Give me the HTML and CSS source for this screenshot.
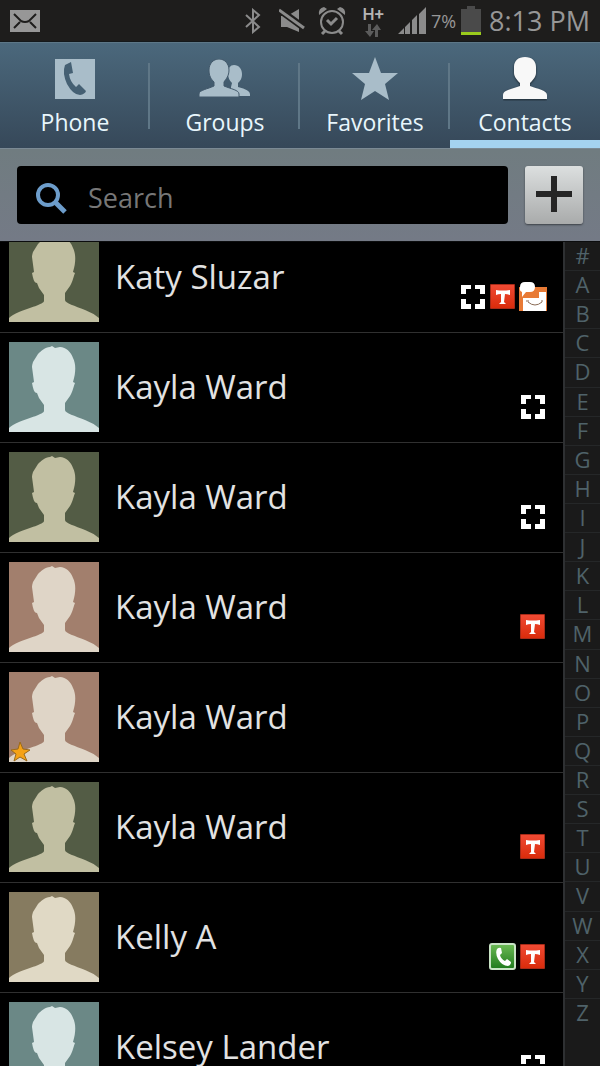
FILE: index.html
```html
<!DOCTYPE html>
<html lang="en">
<head>
    <meta charset="UTF-8">
    <meta name="viewport" content="width=device-width, initial-scale=1.0">
    <title>Contacts</title>
    <link rel="stylesheet" href="styles.css">
</head>
<body>
    <!-- shared shapes -->
    <svg class="defs" aria-hidden="true">
        <symbol id="person" viewBox="0 0 90 90">
            <path d="M43 4L41 5C36 5 32 9 29 12L24 20Q23 23 23 25L25 40L23 41C24 46 25 51 28 51L30 56L35 63V69C35 72 20 76 10 80Q3 83 0 86V90H90V86Q84 81 76 78C66 74 56 71 56 68V61L61 54C64 49 64 46 66 41L64 40C67 30 67 22 64 16C62 10 57 5 51 5L46 6Z"/>
        </symbol>
        <symbol id="focus" viewBox="0 0 30 30">
            <path fill="#fff" d="M3 3H13V7H8V12H3ZM17 3H27V12H22V7H17ZM3 17H8V22H13V27H3ZM22 17H27V27H17V22H22Z"/>
        </symbol>
        <symbol id="tango" viewBox="0 0 30 30">
            <rect x="2" y="2" width="25" height="25" rx="1" fill="#a82a17"/>
            <rect x="3" y="3" width="23" height="23" fill="url(#red)"/>
            <path fill="#fff" d="M8 8Q14 9 22 8V13Q19 12 17 12L16 20L18 22H11L13 20V12Q10 12 8 13Z"/>
        </symbol>
        <symbol id="call" viewBox="0 0 30 30">
            <rect x="2" y="2" width="25" height="25" rx="2" fill="url(#green)" stroke="#c9e3c5" stroke-width="2"/>
            <path fill="#fff" d="M9 7Q11 5 13 6L14 11L12 13Q13 17 17 19L19 17L23 20Q23 23 20 24Q14 24 10 17Q7 11 9 7Z"/>
        </symbol>
        <symbol id="smile" viewBox="0 0 30 30">
            <rect x="1" y="5" width="28" height="24" fill="#e87a35"/>
            <path fill="#fff" d="M5 29V16H21V10H28V29Z"/>
            <path fill="#fff" d="M7 0H12Q17 0 17 5Q17 10 12 10H8L4 15V10Q1 9 2 5Q2 0 7 0Z"/>
            <path fill="none" stroke="#8a6b55" d="M10 20Q17 26 24 20M8 19H11M23 19H25"/>
        </symbol>
        <linearGradient id="red" x1="0" y1="0" x2="0" y2="1">
            <stop offset="0" stop-color="#f04a33"/>
            <stop offset="1" stop-color="#d92c0c"/>
        </linearGradient>
        <linearGradient id="green" x1="0" y1="0" x2="0" y2="1">
            <stop offset="0" stop-color="#6dbb55"/>
            <stop offset="1" stop-color="#1f7a1c"/>
        </linearGradient>
    </svg>

    <header class="status">
        <svg class="mail" width="30" height="22" viewBox="0 0 30 22">
            <path fill="#979797" d="M0 0H30V22H0Z"/>
            <path fill="none" stroke="#1e1d1c" stroke-width="2" d="M4 4L11 11Q15 13 19 11L26 4M4 18L10 12M26 18L20 12"/>
        </svg>
        <svg width="16" height="26" viewBox="0 0 16 26">
            <path fill="none" stroke="#8b8b8b" stroke-width="2" d="M1 7L14 19L8 24V2L14 7L1 19"/>
        </svg>
        <svg width="26" height="26" viewBox="0 0 26 26">
            <path fill="#8b8b8b" d="M2 8H8L20 1V24L8 19H2Z"/>
            <path stroke="#1e1d1c" stroke-width="7" d="M-2 0L28 22"/>
            <path stroke="#8b8b8b" stroke-width="3" d="M0 2L25 20"/>
        </svg>
        <svg width="28" height="30" viewBox="0 0 28 30">
            <g fill="none" stroke="#8b8b8b" stroke-width="2">
                <circle cx="14" cy="16" r="11"/>
                <path stroke-width="3" d="M9 14L13 18L19 12"/>
                <path stroke-width="3" d="M7 25L4 28M21 25L24 28"/>
            </g>
            <path fill="#8b8b8b" d="M1 9Q0 2 6 1L9 3ZM27 9Q28 2 22 1L19 3Z"/>
        </svg>
        <span class="network">
            H+
            <svg width="16" height="13" viewBox="0 0 16 13">
                <path fill="#5c5c5c" d="M3 0H6V7H9L5 13L0 7H3ZM10 13H13V6H16L12 0L7 6H10Z"/>
            </svg>
        </span>
        <svg width="28" height="27" viewBox="0 0 28 27">
            <path fill="#8b8b8b" d="M0 27L6 21V27ZM7 20L12 15V27H7ZM14 13L19 8V27H14ZM21 7L28 0V27H21Z"/>
        </svg>
        <span class="percent">7%</span>
        <svg width="20" height="29" viewBox="0 0 20 29">
            <path fill="#4a4a4a" d="M6 0H14V3H20V26H0V3H6Z"/>
            <path fill="#9acb1c" d="M0 26H20V29H0Z"/>
        </svg>
        <time>8:13 PM</time>
    </header>

    <nav class="tabs">
        <a href="#phone">
            <svg width="40" height="40" viewBox="0 0 40 40">
                <path fill="#a9bdc9" d="M0 0H40V40H0Z"/>
                <path fill="#456073" d="M10 6L16 3L18 14L14 15Q15 23 21 28L24 25L31 32Q30 35 25 36Q18 36 12 25Q7 14 10 6Z"/>
            </svg>
            Phone
        </a>
        <a href="#groups">
            <svg width="52" height="40" viewBox="0 0 52 40">
                <path fill="#a9bdc9" d="M35 6C40 6 43 10 43 15C43 20 41 22 39 24V28Q51 31 51 35V37H32V28L33 24Q29 20 29 15Q29 6 35 6Z"/>
                <path fill="#a9bdc9" stroke="#43596b" d="M20 0C26 0 30 5 30 11C30 17 27 20 25 23V27C32 30 40 31 40 35V38H0V35C0 31 9 30 15 27V23C12 20 10 17 10 11C10 5 14 0 20 0Z"/>
            </svg>
            Groups
        </a>
        <a href="#favorites">
            <svg width="46" height="44" viewBox="0 0 46 44">
                <path fill="#a9bdc9" d="M23 0L29 16H46L33 27L37 43L23 34L9 43L13 27L0 16H17Z"/>
            </svg>
            Favorites
        </a>
        <a class="active" href="#contacts">
            <svg width="44" height="44" viewBox="0 0 44 44">
                <path class="lit" d="M22 0C29 0 33 4 33 10V16C33 20 29 24 27 26V29C34 32 44 33 44 38V42H0V38C0 33 10 32 17 29V26C15 24 11 20 11 16V10C11 4 15 0 22 0Z"/>
            </svg>
            Contacts
        </a>
    </nav>

    <form class="search">
        <label class="field">
            <svg width="32" height="32" viewBox="0 0 32 32">
                <g fill="none" stroke="#6d9dcb">
                    <circle cx="12" cy="12" r="10" stroke-width="4"/>
                    <path stroke-width="5" d="M19 19L29 29"/>
                </g>
            </svg>
            <input type="text" placeholder="Search" aria-label="Search">
        </label>
        <button class="add" type="button" aria-label="Add contact">
            <svg width="36" height="36" viewBox="0 0 36 36">
                <path fill="#252525" d="M15 0H21V15H36V21H21V36H15V21H0V15H15Z"/>
            </svg>
        </button>
    </form>

    <main class="main">
        <ul class="contacts">
            <li>
                <svg class="avatar olive"><use href="#person"/></svg>
                <span class="name">Katy Sluzar</span>
                <span class="badges"><svg><use href="#focus"/></svg><svg><use href="#tango"/></svg><svg><use href="#smile"/></svg></span>
            </li>
            <li>
                <svg class="avatar teal"><use href="#person"/></svg>
                <span class="name">Kayla Ward</span>
                <span class="badges"><svg><use href="#focus"/></svg></span>
            </li>
            <li>
                <svg class="avatar olive"><use href="#person"/></svg>
                <span class="name">Kayla Ward</span>
                <span class="badges"><svg><use href="#focus"/></svg></span>
            </li>
            <li>
                <svg class="avatar rose"><use href="#person"/></svg>
                <span class="name">Kayla Ward</span>
                <span class="badges"><svg><use href="#tango"/></svg></span>
            </li>
            <li>
                <svg class="avatar rose">
                    <use href="#person"/>
                    <path fill="#f5a216" stroke="#9a6a1c" d="M11 70L14 77L21 78L15 82L18 89L11 85L5 89L7 82L2 78L9 77Z"/>
                </svg>
                <span class="name">Kayla Ward</span>
            </li>
            <li>
                <svg class="avatar olive"><use href="#person"/></svg>
                <span class="name">Kayla Ward</span>
                <span class="badges"><svg><use href="#tango"/></svg></span>
            </li>
            <li>
                <svg class="avatar sand"><use href="#person"/></svg>
                <span class="name">Kelly A</span>
                <span class="badges"><svg><use href="#call"/></svg><svg><use href="#tango"/></svg></span>
            </li>
            <li>
                <svg class="avatar teal"><use href="#person"/></svg>
                <span class="name">Kelsey Lander</span>
                <span class="badges"><svg><use href="#focus"/></svg></span>
            </li>
        </ul>
        <nav class="index">
            <a href="#">#</a>
            <a href="#A">A</a>
            <a href="#B">B</a>
            <a href="#C">C</a>
            <a href="#D">D</a>
            <a href="#E">E</a>
            <a href="#F">F</a>
            <a href="#G">G</a>
            <a href="#H">H</a>
            <a href="#I">I</a>
            <a href="#J">J</a>
            <a href="#K">K</a>
            <a href="#L">L</a>
            <a href="#M">M</a>
            <a href="#N">N</a>
            <a href="#O">O</a>
            <a href="#P">P</a>
            <a href="#Q">Q</a>
            <a href="#R">R</a>
            <a href="#S">S</a>
            <a href="#T">T</a>
            <a href="#U">U</a>
            <a href="#V">V</a>
            <a href="#W">W</a>
            <a href="#X">X</a>
            <a href="#Y">Y</a>
            <a href="#Z">Z</a>
        </nav>
    </main>
</body>
</html>
```
FILE: styles.css
```css
* {
    margin: 0;
    padding: 0;
    box-sizing: border-box;
}

body {
    display: flex;
    flex-direction: column;
    height: 100vh;
    overflow: hidden;
    background: #000;
    color: #e2e2e2;
    font-family: "Choco Cooky", "Open Sans", sans-serif;
}

a {
    color: inherit;
    text-decoration: none;
}

svg {
    display: block;
    flex: none;
}

.defs {
    position: absolute;
    width: 0;
    height: 0;
}

/* status bar */
.status {
    display: flex;
    align-items: center;
    height: 42px;
    padding: 0 10px;
    background: #1e1d1c;
    border-bottom: 1px solid #14191c;
    color: #979797;
}

.status > * {
    margin-right: 5px;
}

.status > svg:nth-of-type(-n+3) {
    margin-right: 18px;
}

.status > svg:nth-of-type(3) {
    margin-right: 13px;
}

.status .mail:first-child {
    margin-right: auto;
}

.status > svg:nth-of-type(4) {
    margin-right: 16px;
}

.network {
    display: flex;
    flex-direction: column;
    align-items: center;
    gap: 2px;
    padding-top: 3px;
    color: #b4b4b4;
    font-family: Roboto, sans-serif;
    font-size: 17px;
    font-weight: 500;
    line-height: 15px;
}

.status .network {
    margin-right: 14px;
}

.percent {
    font-size: 18px;
}

.status > svg:last-of-type {
    margin-right: 8px;
}

.status time {
    margin-right: 0;
    font-size: 27px;
    line-height: 40px;
}

/* tabs */
.tabs {
    display: grid;
    grid-template-columns: repeat(4, 1fr);
    height: 107px;
    background: linear-gradient(#4b687c, #364859);
    border-top: 1px solid #5d7787;
    border-bottom: 1px solid #7b8a94;
}

.tabs a {
    display: grid;
    grid-template-rows: 44px 32px;
    gap: 5px;
    justify-items: center;
    align-items: center;
    padding-top: 14px;
    color: #e8f6fc;
    font-size: 23px;
    font-weight: 500;
    line-height: 32px;
    background: linear-gradient(#5f7787, #5f7787) right 20px / 2px 66px no-repeat;
}

.tabs a.active {
    background: none;
    border-bottom: 8px solid #a4d3f0;
}

.lit {
    fill: #f8f8f8;
    filter: drop-shadow(0 1px 1px #1c2831);
}

/* search */
.search {
    display: flex;
    gap: 17px;
    padding: 17px;
    background: linear-gradient(#707c80, #747a86);
}

.field {
    display: flex;
    flex: 1;
    align-items: center;
    gap: 20px;
    height: 58px;
    padding: 8px 19px 0;
    background: #000;
    border-radius: 4px;
}

.field input {
    flex: 1;
    min-width: 0;
    margin-bottom: 4px;
    background: none;
    border: none;
    outline: none;
    color: #e2e2e2;
    font: inherit;
    font-size: 27px;
}

.field input::placeholder {
    color: #777;
    opacity: 1;
}

.add {
    display: flex;
    align-items: center;
    justify-content: center;
    width: 58px;
    height: 58px;
    padding-bottom: 2px;
    background: linear-gradient(#dcdfdf, #a9abab);
    border: none;
    border-radius: 3px;
    box-shadow: 0 1px 2px #3c4146;
    cursor: pointer;
}

/* list */
.main {
    display: flex;
    flex: 1;
    min-height: 0;
    overflow: hidden;
    border-top: 1px solid #0c0d0e;
}

/* the list is scrolled part way into its first row */
.contacts {
    flex: 1;
    margin-top: -19px;
    list-style: none;
}

.contacts li {
    display: flex;
    align-items: center;
    gap: 16px;
    height: 110px;
    padding: 0 15px 2px 9px;
    border-bottom: 1px solid #303030;
}

.avatar {
    width: 90px;
    height: 90px;
}

.olive {
    background: #535c45;
    fill: #c1bfa2;
}

.teal {
    background: #6b8886;
    fill: #d8e5e4;
}

.rose {
    background: #a27f6d;
    fill: #dfd5c7;
}

.sand {
    background: #867b60;
    fill: #e0d9c5;
}

.name {
    flex: 1;
    font-size: 33px;
    font-weight: 500;
    line-height: 44px;
    white-space: nowrap;
}

.badges {
    display: flex;
    align-self: flex-end;
    margin-bottom: 18px;
}

.badges svg {
    width: 30px;
    height: 30px;
}

/* letter index */
.index {
    display: flex;
    flex-direction: column;
    width: 37px;
    padding-bottom: 39px;
    background: #1a1a1a;
    border-left: 2px solid #2e3032;
}

.index a {
    flex: 1;
    min-height: 0;
    border-bottom: 1px solid #252728;
    color: #4f6269;
    font-size: 22px;
    line-height: 26px;
    text-align: center;
}

.index a:last-child {
    border-bottom: none;
}
```
